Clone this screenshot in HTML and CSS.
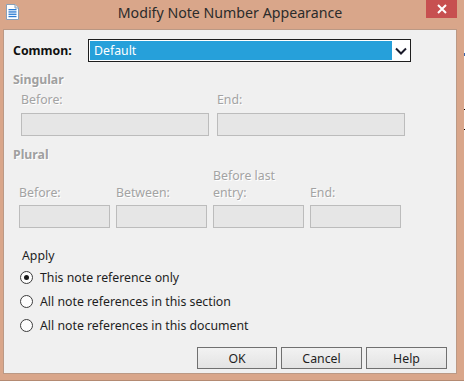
FILE: index.html
```html
<!DOCTYPE html>
<html lang="en">

<head>
    <meta charset="UTF-8">
    <meta name="viewport" content="width=device-width, initial-scale=1.0">
    <title>Modify Note Number Appearance</title>
    <link rel="stylesheet" href="styles.css">
</head>

<body>
    <div class="screen">
        <div class="window">
            <div class="titlebar">
                <div class="app-icon">
                    <svg width="13" height="16" viewBox="0 0 13 16">
                        <path d="M0.5 0.5 H9 L12.5 4 V15.5 H0.5 Z" fill="#fff" stroke="#8aa0b8" />
                        <path d="M9 0.5 V4 H12.5" fill="#dde6f0" stroke="#8aa0b8" />
                        <rect x="2.5" y="5" width="8" height="1.3" fill="#2a7ad2" />
                        <rect x="2.5" y="7.3" width="8" height="1.3" fill="#2a7ad2" />
                        <rect x="2.5" y="9.6" width="8" height="1.3" fill="#2a7ad2" />
                        <rect x="2.5" y="11.9" width="8" height="1.3" fill="#2a7ad2" />
                    </svg>
                </div>
                <div class="title">Modify Note Number Appearance</div>
                <div class="close">
                    <svg width="10" height="10" viewBox="0 0 10 10">
                        <path d="M1 1 L9 9 M9 1 L1 9" stroke="#fff" stroke-width="2" />
                    </svg>
                </div>
            </div>

            <div class="panel">
                <div class="common-row">
                    <span class="common-label">Common:</span>
                    <div class="select">
                        <span class="select-value">Default</span>
                        <span class="select-arrow">
                            <svg width="12" height="8" viewBox="0 0 12 8">
                                <path d="M1 1.5 L6 6.5 L11 1.5" fill="none" stroke="#1a1a2a" stroke-width="2" />
                            </svg>
                        </span>
                    </div>
                </div>

                <div class="group-title">Singular</div>
                <div class="fields singular">
                    <div class="field">
                        <label class="field-label">Before:</label>
                        <div class="input"></div>
                    </div>
                    <div class="field">
                        <label class="field-label">End:</label>
                        <div class="input"></div>
                    </div>
                </div>

                <div class="group-title plural-title">Plural</div>
                <div class="fields plural">
                    <div class="field">
                        <label class="field-label">Before:</label>
                        <div class="input"></div>
                    </div>
                    <div class="field">
                        <label class="field-label">Between:</label>
                        <div class="input"></div>
                    </div>
                    <div class="field">
                        <label class="field-label">Before last<br>entry:</label>
                        <div class="input"></div>
                    </div>
                    <div class="field">
                        <label class="field-label">End:</label>
                        <div class="input"></div>
                    </div>
                </div>

                <div class="apply">
                    <div class="apply-title">Apply</div>
                    <div class="radio checked"><span class="dot"></span>This note reference only</div>
                    <div class="radio"><span class="dot"></span>All note references in this section</div>
                    <div class="radio"><span class="dot"></span>All note references in this document</div>
                </div>

                <div class="buttons">
                    <button class="btn ok">OK</button>
                    <button class="btn">Cancel</button>
                    <button class="btn">Help</button>
                </div>
            </div>
        </div>
        <div class="behind">
            <i class="mark blue"></i>
            <i class="mark one"></i>
            <i class="mark two"></i>
        </div>
    </div>
</body>

</html>
```

FILE: styles.css
```css
* {
    margin: 0;
    padding: 0;
    box-sizing: border-box;
}

body {
    background-color: #fff;
    font-family: "Noto Sans", "Open Sans", sans-serif;
    font-size: 12.3px;
    color: #1e1e1e;
}

.screen {
    display: flex;
    width: 465px;
    height: 381px;
}

.window {
    width: 464px;
    height: 381px;
    padding: 0 7px 0 3px;
    background-color: #d9a68a;
    border-bottom: 1px solid #b48a72;
}

.behind {
    flex: 1;
    position: relative;
    background-color: #fff;
}

.mark {
    position: absolute;
    left: 0;
    width: 1px;
    height: 1px;
    background-color: #000;
}

.mark.blue {
    top: 53px;
    height: 3px;
    background-color: #3a66b0;
}

.mark.one {
    top: 109px;
}

.mark.two {
    top: 129px;
}

/* title bar */
.titlebar {
    height: 29px;
    display: grid;
    grid-template-columns: 1fr auto 1fr;
    align-items: start;
}

.app-icon {
    padding: 4px 0 0 3px;
}

.title {
    padding-top: 3px;
    font-size: 14.2px;
    line-height: 20px;
    color: #2b2b2b;
}

.close {
    justify-self: end;
    width: 31px;
    height: 18px;
    background-color: #c75050;
    display: flex;
    align-items: center;
    justify-content: center;
}

/* panel */
.panel {
    height: 345px;
    padding: 9px 9px 4px 9px;
    background-color: #f0f0f0;
    border: 1px solid #bb9985;
}

.common-row {
    display: flex;
    align-items: center;
}

.common-label {
    width: 75px;
    font-weight: bold;
    color: #111;
}

.select {
    width: 323px;
    height: 23px;
    padding: 1px;
    display: flex;
    border: 1px solid #1e1e1e;
    background-color: #fff;
}

.select-value {
    width: 302px;
    padding-left: 4px;
    line-height: 19px;
    color: #fff;
    background-color: #26a0da;
}

.select-arrow {
    flex: 1;
    display: flex;
    align-items: center;
    justify-content: center;
}

.group-title {
    margin-top: 10px;
    line-height: 15px;
    font-weight: bold;
    color: #a0a0a0;
    text-shadow: 1px 1px 0 #fff;
}

.plural-title {
    margin-top: 11px;
}

.fields {
    display: flex;
    margin-top: 5px;
}

.field {
    display: flex;
    flex-direction: column;
    justify-content: flex-end;
}

.field-label {
    color: #a3a3a3;
    text-shadow: 1px 1px 0 #fff;
}

.input {
    height: 23px;
    background-color: #e6e6e6;
    border: 1px solid #bcbcbc;
}

.singular {
    padding-left: 8px;
    gap: 8px;
}

.singular .field-label {
    line-height: 15px;
    margin-bottom: 6px;
}

.singular .input {
    width: 188px;
}

.plural {
    height: 61px;
    padding-left: 6px;
    gap: 6px;
}

.plural .field-label {
    line-height: 17px;
    margin-bottom: 4px;
}

.plural .input {
    width: 91px;
}

/* apply */
.apply {
    margin-top: 20px;
    padding-left: 7px;
}

.apply-title {
    margin-left: 2px;
    line-height: 15px;
    margin-bottom: 2px;
}

.radio {
    height: 24px;
    display: flex;
    align-items: center;
    gap: 7px;
    line-height: 15px;
}

.dot {
    width: 13px;
    height: 13px;
    border-radius: 50%;
    border: 1px solid #3c3c3c;
    background-color: #fdfdfd;
    display: flex;
    align-items: center;
    justify-content: center;
}

.checked .dot::after {
    content: "";
    width: 5px;
    height: 5px;
    border-radius: 50%;
    background-color: #1a1a1a;
}

/* buttons */
.buttons {
    margin-top: 10px;
    display: flex;
    justify-content: flex-end;
    gap: 4px;
}

.btn {
    width: 81px;
    height: 22px;
    font-family: inherit;
    font-size: 12.3px;
    color: #1e1e1e;
    border: 1px solid #707070;
    background: linear-gradient(#f2f2f2, #e3e3e3);
}

.btn.ok {
    width: 80px;
}
```
